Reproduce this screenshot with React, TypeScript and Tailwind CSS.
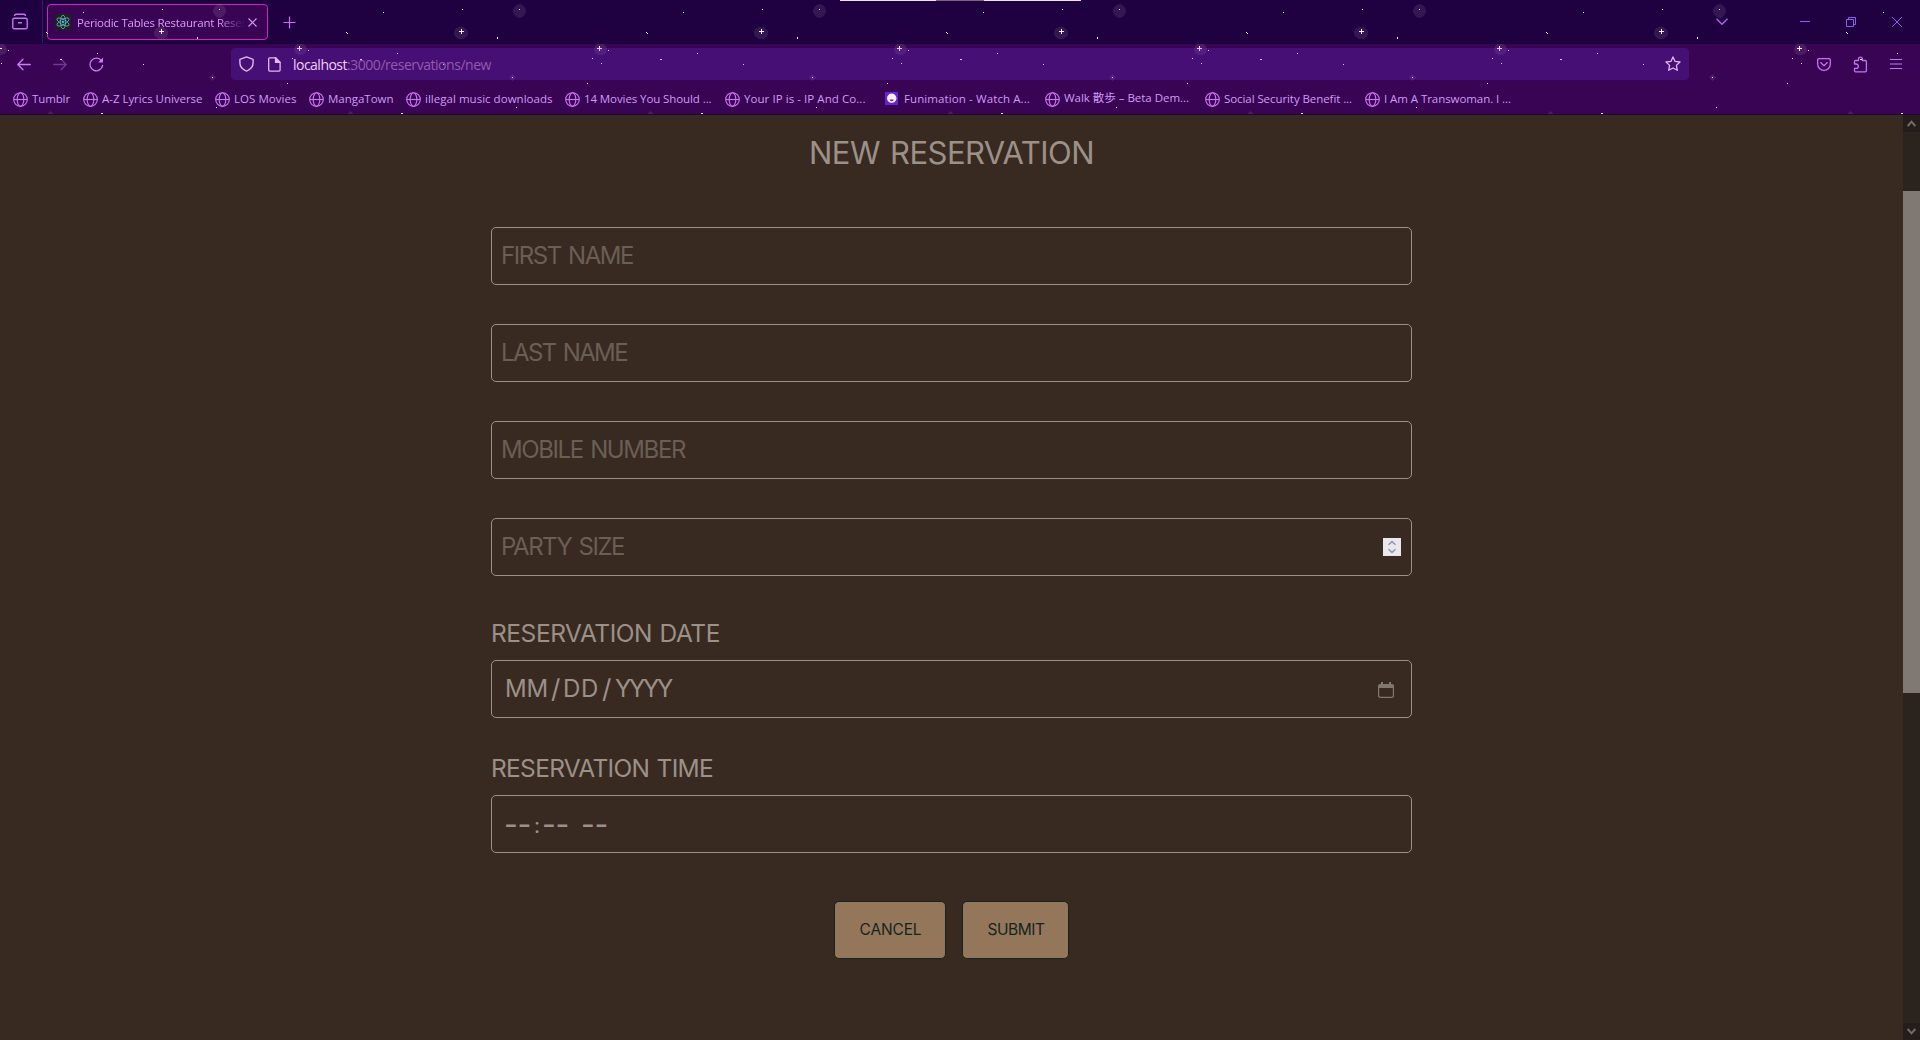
import React, { useLayoutEffect, useRef } from "react";

/** Single line of text whose tracking is adjusted so that it fills a given width. */
function Fit({ w, className = "", children }: { w: number; className?: string; children: string }) {
  const ref = useRef<HTMLSpanElement>(null);
  useLayoutEffect(() => {
    const el = ref.current;
    if (!el) return;
    const apply = () => {
      el.style.letterSpacing = "0px";
      const natural = el.getBoundingClientRect().width;
      el.style.letterSpacing = `${(w - natural) / Array.from(children).length}px`;
    };
    apply();
    document.fonts?.ready.then(apply);
  }, [w, children]);
  return (
    <span ref={ref} className={`inline-block shrink-0 whitespace-pre ${className}`}>
      {children}
    </span>
  );
}

const Globe = () => (
  <svg width="15" height="15" viewBox="0 0 15 15" fill="none" stroke="#c873f0" strokeWidth="1.15" className="shrink-0">
    <circle cx="7.5" cy="7.5" r="6.8" />
    <ellipse cx="7.5" cy="7.5" rx="3.3" ry="6.8" />
    <path d="M.7 7.5h13.6" />
  </svg>
);

const Funimation = () => (
  <svg width="15" height="15" viewBox="0 0 15 15" className="shrink-0">
    <rect x="0" y="0" width="13" height="13" fill="#6a22d0" />
    <circle cx="6.7" cy="6.3" r="4.7" fill="#f6efff" />
    <path d="M4.7 7.6h4a2 1.6 0 0 1-4 0z" fill="#6a22d0" />
  </svg>
);

/** Night-sky pattern of the browser theme; repeats every 300px. */
function Stars() {
  return (
    <svg className="pointer-events-none absolute inset-0 z-10" width="1920" height="114" shapeRendering="crispEdges">
      <defs>
        <pattern id="sky" width="300" height="114" patternUnits="userSpaceOnUse">
          <g fill="#ffffff" fillOpacity="0.09">
            <ellipse cx="219.5" cy="11" rx="6.3" ry="6.8" />
            <ellipse cx="161" cy="33" rx="7" ry="6" />
            <ellipse cx="0.5" cy="49.3" rx="6.3" ry="5.8" />
            <ellipse cx="300.5" cy="49.3" rx="6.3" ry="5.8" />
            <path d="M212.5 74l3.5 3.5-3.5 3.5-3.5-3.5z" />
            <path d="M50.5 111l3.5 3.5-3.5 3.5-3.5-3.5z" />
          </g>
          <g fill="#fff4fb">
            <path d="M219 9h1v1h-1zM83 12h1v1h-1zM162 9h1v1h-1zM46 32h1v1h-1zM47 33h1v1h-1zM197 37h1v2h-1z" />
            <path d="M159 31h5v1h-5zM161 29h1v5h-1z" />
            <path d="M297 48h3v1h-3zM0 48h2v1h-2zM299 46h1v5h-1z" />
            <path d="M8 50h1v1h-1zM97 53h1v1h-1zM292 58h1v1h-1zM1 63h1v1h-1zM60 59h2v1h-2zM143 64h1v1h-1z" />
            <path d="M212 77h1v1h-1zM287 83h1v1h-1zM216 107h1v1h-1zM101 113h2v1h-2z" />
          </g>
        </pattern>
      </defs>
      <rect width="1920" height="114" fill="url(#sky)" />
    </svg>
  );
}

type Mark = { label: string; item: string; w: number; fun?: boolean; up?: boolean };
const bookmarks: Mark[] = [
  { label: "Tumblr", item: "w-[70px]", w: 38 },
  { label: "A-Z Lyrics Universe", item: "w-[132px]", w: 100.5 },
  { label: "LOS Movies", item: "w-[94px]", w: 62.5 },
  { label: "MangaTown", item: "w-[97px]", w: 65.5 },
  { label: "illegal music downloads", item: "w-[159px]", w: 127.5 },
  { label: "14 Movies You Should ...", item: "w-[160px]", w: 127.5 },
  { label: "Your IP is - IP And Co...", item: "w-[160px]", w: 121.5 },
  { label: "Funimation - Watch A...", item: "w-[160px]", w: 126, fun: true },
  { label: "Walk 散歩 – Beta Dem...", item: "w-[160px]", w: 125, up: true },
  { label: "Social Security Benefit ...", item: "w-[160px]", w: 128 },
  { label: "I Am A Transwoman. I ...", item: "w-[160px]", w: 127 },
];

function TitleBar() {
  return (
    <div className="flex h-[44px] border-b border-[#19003a] bg-[#1f0041]">
      <div className="flex w-[43px] items-center border-r border-[#3b1775] pl-3">
        <svg width="16" height="17" viewBox="0 0 16 17" fill="none" stroke="#c873f0" strokeWidth="1.4">
          <rect x=".8" y="5.2" width="14.4" height="10.6" rx="1.6" />
          <path d="M2.5 2.9c0-1 .6-1.7 1.6-1.7h7.8c1 0 1.6.7 1.6 1.7M6 9.7h4" />
        </svg>
      </div>
      <div className="ml-1 mt-1 flex h-9 w-[221px] items-center rounded-[4px] border border-[#d126bb] bg-[#390453] pl-[7px]">
        <svg width="16" height="16" viewBox="0 0 16 16" fill="none" stroke="#55b9cc" strokeWidth=".8" className="shrink-0">
          <rect width="16" height="16" rx="1" fill="#22201f" stroke="none" />
          <ellipse cx="8" cy="8" rx="6.8" ry="2.6" transform="rotate(30 8 8)" />
          <ellipse cx="8" cy="8" rx="6.8" ry="2.6" transform="rotate(90 8 8)" />
          <ellipse cx="8" cy="8" rx="6.8" ry="2.6" transform="rotate(150 8 8)" />
          <circle cx="8" cy="8" r="1" fill="#55b9cc" />
        </svg>
        <div className="-mt-0.5 ml-[6px] w-[168px] shrink-0 overflow-hidden [mask-image:linear-gradient(to_right,#000_84%,transparent_100%)]">
          <Fit w={169} className="text-[11.5px] leading-5 text-[#dd9bf7]">Periodic Tables Restaurant Reser</Fit>
        </div>
        <svg width="9" height="9" viewBox="0 0 9 9" stroke="#d79af0" strokeWidth="1.1" className="ml-[3px] shrink-0">
          <path d="M.5.5l8 8M8.5.5l-8 8" />
        </svg>
      </div>
      <svg width="13" height="13" viewBox="0 0 13 13" stroke="#c873f0" strokeWidth="1.2" className="ml-[15px] mt-4">
        <path d="M6.5.5v12M.5 6.5h12" />
      </svg>
      <div className="ml-auto flex h-[44px] w-[204px] items-start">
        <svg width="12" height="8" viewBox="0 0 12 8" fill="none" stroke="#b765e6" strokeWidth="1.3" className="mt-[18px]">
          <path d="M.5.8L6 6.3 11.5.8" />
        </svg>
        <svg width="10" height="1" className="ml-[72px] mt-[21px]">
          <rect width="10" height="1" fill="#8f5cf0" />
        </svg>
        <svg width="10" height="10" viewBox="0 0 10 10" fill="none" stroke="#8f5cf0" className="ml-9 mt-[17px]">
          <path d="M.5 2.5h7v7h-7zM2.500 2.500v-2h7v7h-2" />
        </svg>
        <svg width="10" height="10" viewBox="0 0 10 10" fill="none" stroke="#8f5cf0" className="ml-9 mt-[17px]">
          <path d="M0 0l10 10M10 0L0 10" />
        </svg>
      </div>
    </div>
  );
}

function NavBar() {
  return (
    <div className="flex h-[40px] items-start bg-[#390453] pt-1">
      <div className="flex h-8 w-[231px] items-center pl-[17px]">
        <svg width="14" height="13" viewBox="0 0 14 13" fill="none" stroke="#d07af5" strokeWidth="1.3" strokeLinecap="round" strokeLinejoin="round">
          <path d="M13.300 6.500H.900M6 1.200L.800 6.500 6 11.800" />
        </svg>
        <svg width="14" height="13" viewBox="0 0 14 13" fill="none" stroke="#783499" strokeWidth="1.3" strokeLinecap="round" strokeLinejoin="round" className="ml-[22px]">
          <path d="M.700 6.500h12.400M8 1.200l5.200 5.300L8 11.800" />
        </svg>
        <svg width="15" height="15" viewBox="0 0 15 15" fill="none" stroke="#d07af5" strokeWidth="1.3" className="ml-[22px] mt-px">
          <path d="M12.400 3.700A6.300 6.300 0 1 0 13.600 8.300" strokeLinecap="round" />
          <path d="M14 .6v5H9z" fill="#d07af5" stroke="none" />
        </svg>
      </div>
      <div className="relative z-20 flex h-8 w-[1458px] items-center rounded-[4px] bg-[rgba(108,48,218,0.25)] pl-2 pr-2">
        <svg width="15" height="16" viewBox="0 0 15 16" fill="none" stroke="#e3b7ee" strokeWidth="1.4" strokeLinejoin="round">
          <path d="M7.5.9l6.600 2.400v3.500c0 3.700-2.600 6.700-6.600 8.300C3.500 13.500.900 10.500.900 6.800V3.300z" />
        </svg>
        <svg width="13" height="15" viewBox="0 0 13 15" fill="none" stroke="#e3b7ee" strokeWidth="1.3" strokeLinejoin="round" className="ml-[14px]">
          <path d="M1.700.800h5.800l4.600 4.600v7.700c0 .6-.4 1-1 1H1.700c-.6 0-1-.4-1-1V1.800c0-.6.4-1 1-1z" />
          <path d="M7.500.800v4.600h4.600z" fill="#e3b7ee" />
        </svg>
        <div className="ml-3 flex pt-0.5 text-[14px] leading-6">
          <Fit w={54} className="text-[#f2cdf7]">localhost</Fit>
          <Fit w={144} className="text-[#955aab]">:3000/reservations/new</Fit>
        </div>
        <svg width="16" height="16" viewBox="0 0 16 16" fill="none" stroke="#e3b7ee" strokeWidth="1.3" strokeLinejoin="round" className="ml-auto">
          <path d="M8 .900l2.100 4.500 4.900.600-3.600 3.400.900 4.900L8 12l-4.300 2.300.900-4.900L1 6l4.900-.600z" />
        </svg>
      </div>
      <div className="flex h-8 w-[231px] items-center pl-[128px]">
        <svg width="14" height="13" viewBox="0 0 14 13" fill="none" stroke="#c873f0" strokeWidth="1.3" strokeLinejoin="round" strokeLinecap="round">
          <path d="M2 .700h10c.8 0 1.300.500 1.300 1.300v4c0 3.600-2.700 6.300-6.300 6.300S.700 9.600.700 6V2C.700 1.200 1.200.700 2 .700z" />
          <path d="M3.800 4.700L7 7.700l3.200-3" />
        </svg>
        <svg width="15" height="17" viewBox="0 0 15 17" fill="none" stroke="#c873f0" strokeWidth="1.3" strokeLinejoin="round" className="ml-[22px]">
          <path d="M1.500 8V5.500c0-.6.400-1 1-1h3V3a1.900 1.900 0 0 1 3.900 0v1.500h3c.6 0 1 .4 1 1v9.300c0 .6-.4 1-1 1H2.500c-.6 0-1-.4-1-1v-2.500h1.700a2 2 0 0 0 0-4.300z" />
        </svg>
        <svg width="12" height="10" viewBox="0 0 12 10" fill="#c873f0" className="-mt-px ml-[22px]">
          <path d="M0 0h12v1H0zM0 4.500h12v1H0zM0 9h12v1H0z" />
        </svg>
      </div>
    </div>
  );
}

function BookmarksBar() {
  return (
    <div className="flex h-[31px] items-center border-b border-[#1c0530] bg-[#390453] pl-[13px] text-[11.5px] leading-5 text-[#cf9bf7]">
      {bookmarks.map((b) => (
        <div key={b.label} className={`flex shrink-0 items-center gap-1 ${b.item}`}>
          {b.fun ? <Funimation /> : <Globe />}
          <Fit w={b.w} className={b.up ? "-mt-0.5" : ""}>{b.label}</Fit>
        </div>
      ))}
    </div>
  );
}

function Field({ children, className = "" }: { children: React.ReactNode; className?: string }) {
  return (
    <div className={`flex h-[58px] w-[921px] items-center rounded-[5px] border border-[#9b9189] ${className}`}>
      {children}
    </div>
  );
}

function ReservationForm() {
  const placeholder = "text-[24px] leading-9 text-[#6a5e55] [word-spacing:2px]";
  const label = "text-[24.5px] leading-9 text-[#9b9189] [word-spacing:1px]";
  const value = "text-[24px] leading-9";
  return (
    <main className="flex w-[1903px] flex-col items-center bg-[#382a20] pt-[14px] font-['Inter',sans-serif] text-[#9b9189]">
      <h1 className="flex h-12 items-center text-[31px] leading-[48px] [word-spacing:2px]">
        <Fit w={285}>NEW RESERVATION</Fit>
      </h1>
      <form className="mt-[50px] flex w-[921px] flex-col">
        <div className="flex flex-col gap-[39px]">
          <Field className="pl-[9px]"><Fit w={132} className={placeholder}>FIRST NAME</Fit></Field>
          <Field className="pl-[9px]"><Fit w={126} className={placeholder}>LAST NAME</Fit></Field>
          <Field className="pl-[9px]"><Fit w={184} className={placeholder}>MOBILE NUMBER</Fit></Field>
          <Field className="justify-between pl-[9px] pr-[10px]">
            <Fit w={123} className={placeholder}>PARTY SIZE</Fit>
            <svg width="18" height="18" viewBox="0 0 18 18" fill="none" stroke="#9a96a4" strokeWidth="1.5">
              <rect width="18" height="18" fill="#e9e8ef" stroke="none" />
              <path d="M5.500 6.800L9 3.600l3.500 3.200M5.500 11.200L9 14.400l3.500-3.200" />
            </svg>
          </Field>
        </div>
        <div className="mt-[39px] flex flex-col gap-[9px]">
          <Fit w={229} className={`self-start ${label}`}>RESERVATION DATE</Fit>
          <Field className="justify-between pl-3 pr-[17px]">
            <div className="flex pl-px">
              <Fit w={43} className={value}>MM</Fit>
              <span className="w-[15px] pl-[3px] text-[26px] leading-9">/</span>
              <Fit w={36} className={value}>DD</Fit>
              <span className="w-4 pl-[3px] text-[26px] leading-9">/</span>
              <Fit w={56} className={value}>YYYY</Fit>
            </div>
            <svg width="16" height="16" viewBox="0 0 16 16" className="mt-0.5">
              <path d="M3 0h2v3H3zM11 0h2v3h-2z" fill="#81776f" />
              <rect x=".6" y="2.6" width="14.8" height="12.8" rx="1.6" fill="none" stroke="#81776f" strokeWidth="1.2" />
              <path d="M.5 3h15v3H.5z" fill="#81776f" />
            </svg>
          </Field>
        </div>
        <div className="mt-8 flex flex-col gap-[9px]">
          <Fit w={222} className={`self-start ${label}`}>RESERVATION TIME</Fit>
          <Field className="pl-3">
            <Fit w={27} className="text-[30px] leading-9">--</Fit>
            <span className="w-[11px] pl-[3px] pt-1 text-[21px] leading-9">:</span>
            <Fit w={27} className="text-[30px] leading-9">--</Fit>
            <Fit w={27} className="ml-3 text-[30px] leading-9">--</Fit>
          </Field>
        </div>
        <div className="mt-12 flex h-[58px] justify-center gap-4 text-[15.5px] text-[#14251f]">
          <button type="button" className="flex w-[112px] items-center justify-center rounded-[5px] border border-[#14251f] bg-[#94775b] pl-px">
            <Fit w={62}>CANCEL</Fit>
          </button>
          <button type="button" className="flex w-[107px] items-center justify-center rounded-[5px] border border-[#14251f] bg-[#94775b] pl-px">
            <Fit w={57}>SUBMIT</Fit>
          </button>
        </div>
      </form>
    </main>
  );
}

function Scrollbar() {
  return (
    <div className="flex w-[17px] flex-col bg-[#2b231d]">
      <div className="flex h-[17px] items-center justify-center bg-[#241d1b]">
        <svg width="9" height="7" viewBox="0 0 9 7" fill="none" stroke="#746d68" strokeWidth="2">
          <path d="M.700 6L4.500 1.700 8.300 6" />
        </svg>
      </div>
      <div className="mt-[59px] h-[502px] bg-[#7f7974]" />
      <div className="mt-auto flex h-[17px] items-center justify-center bg-[#241d1b]">
        <svg width="9" height="7" viewBox="0 0 9 7" fill="none" stroke="#746d68" strokeWidth="2">
          <path d="M.700 1L4.500 5.300 8.300 1" />
        </svg>
      </div>
    </div>
  );
}

export default function App() {
  return (
    <div className="flex h-[1040px] w-[1920px] flex-col overflow-hidden bg-[#382a20] font-['Open_Sans','Noto_Sans_CJK_JP',sans-serif]">
      <header className="relative isolate h-[115px] shrink-0">
        <TitleBar />
        <NavBar />
        <BookmarksBar />
        <Stars />
        <div className="absolute left-[840px] top-0 z-20 flex h-px">
          <div className="w-24 bg-[#ebe6ee]" />
          <div className="w-12 bg-[#75687e]" />
          <div className="w-[97px] bg-[#ebe6ee]" />
        </div>
      </header>
      <div className="flex min-h-0 flex-1">
        <ReservationForm />
        <Scrollbar />
      </div>
    </div>
  );
}
